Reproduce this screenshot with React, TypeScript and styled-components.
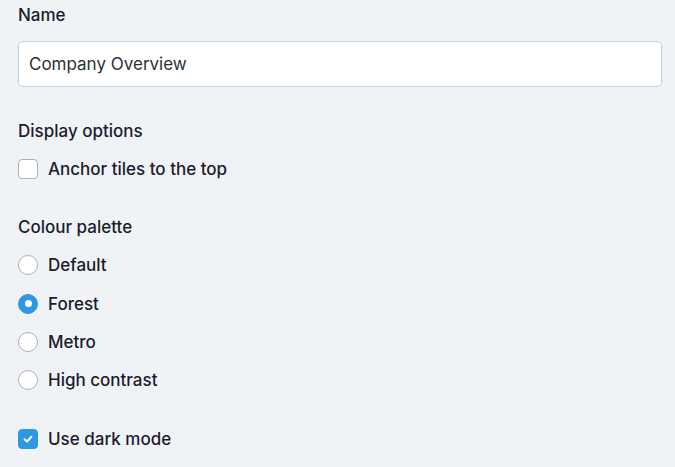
import React, { useState } from "react";
import styled, { createGlobalStyle } from "styled-components";

const Global = createGlobalStyle`
  html, body { margin: 0; padding: 0; background: #f0f3f5; }
  body { font-family: Inter, "Noto Sans", "Liberation Sans", sans-serif; }
  * { box-sizing: border-box; }
`;

const Page = styled.div`
  display: flex;
  flex-direction: column;
  padding: 4px 13px 0 18px;
  width: 675px;
  height: 467px;
  overflow: hidden;
  color: #1c1b30;
`;

const Section = styled.div<{ $gap?: number }>`
  display: flex;
  flex-direction: column;
  margin-bottom: ${(p) => p.$gap ?? 0}px;
`;

const Label = styled.div<{ $mb?: number }>`
  font-size: 17px;
  font-weight: 500;
  line-height: 22px;
  margin-bottom: ${(p) => p.$mb ?? 15}px;
`;

const TextInput = styled.input`
  width: 100%;
  height: 46px;
  border: 1px solid #c9cfd6;
  border-radius: 5px;
  background: #ffffff;
  padding: 0 10px;
  font-family: inherit;
  font-size: 17px;
  color: #2c3036;
  outline: none;
`;

const OptionRow = styled.label<{ $h?: number }>`
  display: flex;
  align-items: center;
  gap: 10px;
  height: ${(p) => p.$h ?? 38}px;
  font-size: 17px;
  font-weight: 500;
  cursor: pointer;
`;

const Box = styled.span<{ $checked: boolean }>`
  width: 20px;
  height: 20px;
  flex: none;
  border-radius: 4px;
  display: flex;
  align-items: center;
  justify-content: center;
  background: ${(p) => (p.$checked ? "#2e98e0" : "#ffffff")};
  border: 1px solid ${(p) => (p.$checked ? "#2e98e0" : "#a9b1bb")};
`;

const Radio = styled.span<{ $checked: boolean }>`
  width: 20px;
  height: 20px;
  flex: none;
  border-radius: 50%;
  display: flex;
  align-items: center;
  justify-content: center;
  background: ${(p) => (p.$checked ? "#2e98e0" : "#ffffff")};
  border: 1px solid ${(p) => (p.$checked ? "#2e98e0" : "#a9b1bb")};
  &::after {
    content: "";
    display: ${(p) => (p.$checked ? "block" : "none")};
    width: 7px;
    height: 7px;
    border-radius: 50%;
    background: #ffffff;
  }
`;

const Check = () => (
  <svg width="12" height="12" viewBox="0 0 12 12" fill="none">
    <path d="M2.6 6.3 L5 8.6 L9.4 3.8" stroke="#fff" strokeWidth="2" strokeLinecap="round" strokeLinejoin="round" />
  </svg>
);

const palettes = ["Default", "Forest", "Metro", "High contrast"];

export default function App() {
  const [anchor, setAnchor] = useState(false);
  const [palette, setPalette] = useState("Forest");
  const [dark, setDark] = useState(true);

  return (
    <>
      <Global />
      <Page>
        <Section $gap={33}>
          <Label>Name</Label>
          <TextInput defaultValue="Company Overview" />
        </Section>
        <Section $gap={28}>
          <Label $mb={8}>Display options</Label>
          <OptionRow onClick={() => setAnchor(!anchor)}>
            <Box $checked={anchor}>{anchor && <Check />}</Box>
            Anchor tiles to the top
          </OptionRow>
        </Section>
        <Section $gap={20}>
          <Label $mb={8}>Colour palette</Label>
          {palettes.map((p) => (
            <OptionRow key={p} $h={38.4} onClick={() => setPalette(p)}>
              <Radio $checked={palette === p} />
              {p}
            </OptionRow>
          ))}
        </Section>
        <Section>
          <OptionRow onClick={() => setDark(!dark)}>
            <Box $checked={dark}>{dark && <Check />}</Box>
            Use dark mode
          </OptionRow>
        </Section>
      </Page>
    </>
  );
}
